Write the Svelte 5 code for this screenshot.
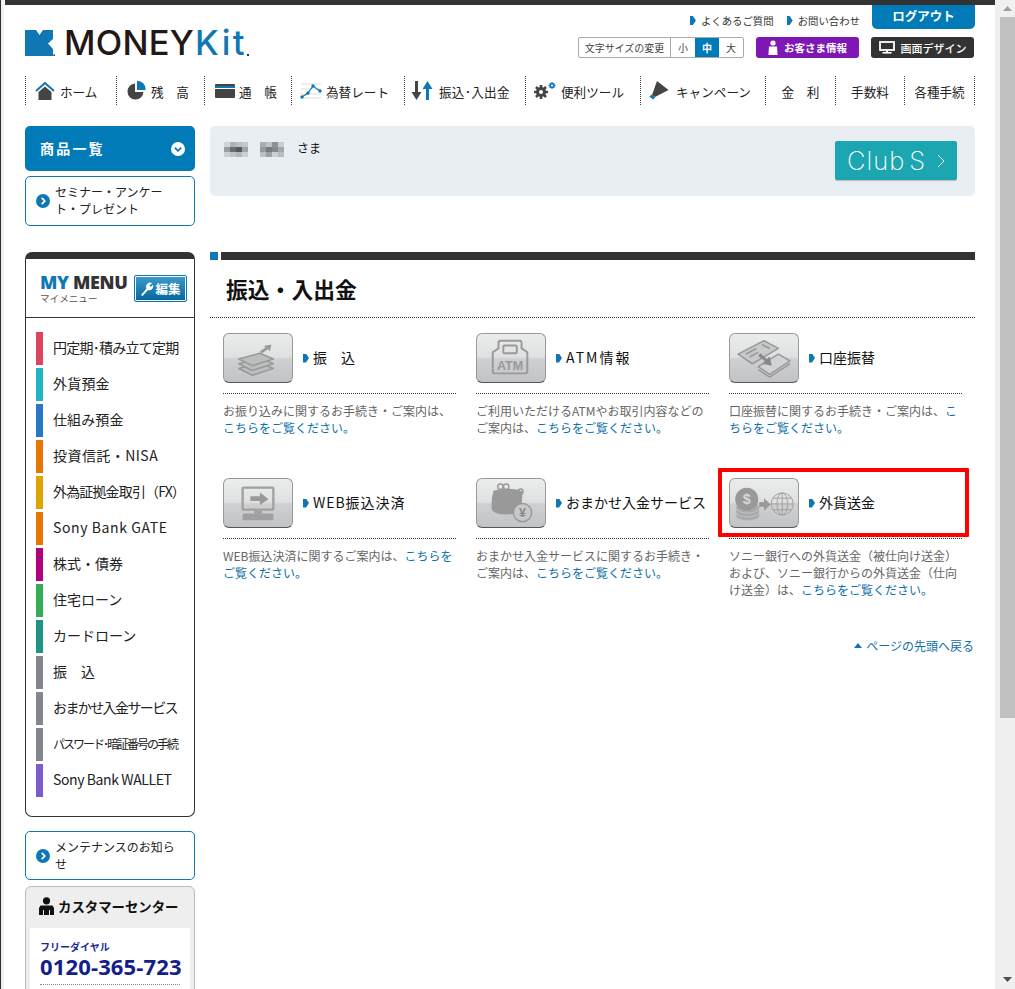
<script>
  const navItems = [
    { icon: 'home', label: 'ホーム' },
    { icon: 'pie', label: '残　高' },
    { icon: 'book', label: '通　帳' },
    { icon: 'rate', label: '為替レート' },
    { icon: 'arrows', label: '振込･入出金' },
    { icon: 'gear', label: '便利ツール' },
    { icon: 'mega', label: 'キャンペーン' },
    { icon: '', label: '金　利' },
    { icon: '', label: '手数料' },
    { icon: '', label: '各種手続' }
  ];
  const menu = [
    { label: '円定期･積み立て定期', color: '#dc4560', ls: '-.75px' },
    { label: '外貨預金', color: '#22b3c4', ls: '.2px' },
    { label: '仕組み預金', color: '#2878c4', ls: '.1px' },
    { label: '投資信託・NISA', color: '#e87700', ls: '.45px' },
    { label: '外為証拠金取引（FX）', color: '#e0a400', ls: '-.85px' },
    { label: 'Sony Bank GATE', color: '#e87700', ls: '.6px' },
    { label: '株式・債券', color: '#b0007e', ls: '0' },
    { label: '住宅ローン', color: '#35ac55', ls: '0' },
    { label: 'カードローン', color: '#1d9484', ls: '0' },
    { label: '振　込', color: '#83878d', ls: '0' },
    { label: 'おまかせ入金サービス', color: '#83878d', ls: '-1.6px' },
    { label: 'パスワード･暗証番号の手続', color: '#83878d', ls: '-2px', tight: true },
    { label: 'Sony Bank WALLET', color: '#7c5cc8', ls: '-.4px' }
  ];
  const tiles = [
    { icon: 'transfer', label: '振　込', ls: '0', before: 'お振り込みに関するお手続き・ご案内は、', link: 'こちらをご覧ください。' },
    { icon: 'atm', label: 'ATM情報', ls: '2px', before: 'ご利用いただけるATMやお取引内容などのご案内は、', link: 'こちらをご覧ください。' },
    { icon: 'debit', label: '口座振替', ls: '0', before: '口座振替に関するお手続き・ご案内は、', link: 'こちらをご覧ください。' },
    { icon: 'web', label: 'WEB振込決済', ls: '.95px', before: 'WEB振込決済に関するご案内は、', link: 'こちらをご覧ください。' },
    { icon: 'purse', label: 'おまかせ入金サービス', ls: '0', before: 'おまかせ入金サービスに関するお手続き・ご案内は、', link: 'こちらをご覧ください。' },
    { icon: 'remit', label: '外貨送金', ls: '0', before: 'ソニー銀行への外貨送金（被仕向け送金）および、ソニー銀行からの外貨送金（仕向け送金）は、', link: 'こちらをご覧ください。', marked: true }
  ];
  const blurA = ['#d3d6d9','#aeb2b6','#bcc0c3','#c4c8cb','#9a9da1','#6a6d71','#55585c','#a0a4a7','#cdd0d3','#bfc3c6','#b4b8bb','#ccd0d2'];
  const blurB = ['#a9adb1','#bfc3c6','#8f9397','#c9ccd0','#96999e','#777b7f','#85898d','#a3a7aa','#bcc0c3','#9ea2a5','#cdd0d2','#b8bcbf'];
</script>

<div class="win">
  <div class="edge"></div>
  <div class="page">
    <div class="topbar"></div>
    <header class="head">
      <div class="logo">
        <svg class="emblem" viewBox="0 0 30 26" width="30" height="26">
          <path d="M0 0H11L14.5 5L18 0H28V9L23 13.5L28 19V26H0Z" fill="#0f78b4" />
          <rect x="28.4" y="24.4" width="1.6" height="1.6" fill="#333" />
        </svg>
        <span class="word">MONEY</span><span class="word kit">Kit</span><i class="dot"></i>
      </div>
      <div class="util">
        <div class="util-top">
          <a class="tlink"><i class="tri"></i>よくあるご質問</a>
          <a class="tlink"><i class="tri"></i>お問い合わせ</a>
          <a class="logout">ログアウト</a>
        </div>
        <div class="util-bottom">
          <div class="sizes">
            <span class="sz-label">文字サイズの変更</span>
            <span class="sz">小</span>
            <span class="sz on">中</span>
            <span class="sz">大</span>
          </div>
          <a class="pill purple">
            <svg viewBox="0 0 10 15" width="10" height="15"><circle cx="5" cy="3" r="2.6" fill="#fff" /><path d="M1 6.5H9L9.6 15H.4Z" fill="#fff" /></svg>
            お客さま情報
          </a>
          <a class="pill dark">
            <svg viewBox="0 0 16 13" width="16" height="13"><rect x="1" y="1" width="14" height="8" fill="none" stroke="#fff" stroke-width="1.8" /><rect x="7" y="9" width="2" height="2" fill="#fff" /><rect x="3.5" y="11" width="9" height="1.6" fill="#fff" /></svg>
            <span class="thin">画面デザイン</span>
          </a>
        </div>
      </div>
    </header>

    <nav class="nav">
      {#each navItems as item}
        <a class="nav-item" class:plain={!item.icon}>
          {#if item.icon === 'home'}
            <svg viewBox="0 0 20 18" width="20" height="18"><path d="M1 9L10 1L19 9" fill="none" stroke="#0f78b4" stroke-width="2" /><path d="M3.5 10L10 4.5L16.5 10V18H3.5Z" fill="#444" /></svg>
          {:else if item.icon === 'pie'}
            <svg viewBox="0 0 19 19" width="19" height="19"><path d="M8 2.5A8 8 0 1 0 16.5 11H8Z" fill="#444" /><path d="M10 0A8 8 0 0 1 18.5 9H10Z" fill="#0f78b4" /></svg>
          {:else if item.icon === 'book'}
            <svg viewBox="0 0 20 14" width="20" height="14"><rect width="20" height="14" rx="1" fill="#444" /><rect y="2" width="20" height="3" fill="#fff" /><rect y="2" width="20" height="2" fill="#0f78b4" /></svg>
          {:else if item.icon === 'rate'}
            <svg viewBox="0 0 22 16" width="22" height="16"><path d="M1 1H21M1 6H21M1 11H21M1 15H21" stroke="#ddd" /><path d="M2 14L8 10L13 3L20 8" fill="none" stroke="#0f78b4" stroke-width="1.2" /><circle cx="2" cy="14" r="1.7" fill="#0f78b4" /><circle cx="8" cy="10" r="1.7" fill="#0f78b4" /><circle cx="13" cy="3" r="1.7" fill="#0f78b4" /><circle cx="20" cy="8" r="1.7" fill="#0f78b4" /></svg>
          {:else if item.icon === 'arrows'}
            <svg viewBox="0 0 22 19" width="22" height="19"><path d="M4 0H7V11H10.5L5.5 19L.5 11H4Z" fill="#444" /><path d="M15 19H18V8H21.5L16.5 0L11.5 8H15Z" fill="#0f78b4" /></svg>
          {:else if item.icon === 'gear'}
            <svg viewBox="0 0 24 19" width="24" height="19"><g stroke="#444" stroke-width="2.6"><path d="M8 4V18M1 11H15M3 6L13 16M13 6L3 16" /></g><circle cx="8" cy="11" r="5" fill="#444" /><circle cx="8" cy="11" r="2" fill="#fff" /><g stroke="#0f78b4" stroke-width="1.3"><path d="M19 1V8M15.5 4.5H22.5M16.6 2.1L21.4 6.9M21.4 2.1L16.6 6.9" /></g><circle cx="19" cy="4.5" r="2.5" fill="#0f78b4" /><circle cx="19" cy="4.5" r="1.1" fill="#fff" /></svg>
          {:else if item.icon === 'mega'}
            <svg viewBox="0 0 20 19" width="20" height="19"><path d="M8 0L19.5 9L6 16L3 14Z" fill="#444" /><path d="M2.6 13.4L6.2 16.3L4.2 18.6L.4 15.8Z" fill="#0f78b4" /></svg>
          {/if}
          <span class="nav-label">{item.label}</span>
        </a>
      {/each}
    </nav>

    <div class="layout">
      <aside class="side">
        <a class="products">
          <span class="products-t">商品一覧</span>
          <i class="circle"><svg viewBox="0 0 14 14" width="14" height="14"><circle cx="7" cy="7" r="7" fill="#fff" /><path d="M3.8 5.7L7 8.8L10.2 5.7" fill="none" stroke="#0b76b2" stroke-width="1.7" /></svg></i>
        </a>
        <a class="linkbox first">
          <svg viewBox="0 0 14 14" width="14" height="14"><circle cx="7" cy="7" r="7" fill="#0f78b4" /><path d="M5.7 3.8L8.8 7L5.7 10.2" fill="none" stroke="#fff" stroke-width="1.7" /></svg>
          <span class="lb-t">セミナー・アンケー<br />ト・プレゼント</span>
        </a>

        <section class="mymenu">
          <div class="mm-head">
            <div class="mm-title">
              <div class="mm-en"><b class="my">MY</b> <b>MENU</b></div>
              <div class="mm-ja">マイメニュー</div>
            </div>
            <a class="edit">
              <svg viewBox="0 0 14 14" width="14" height="14"><path d="M1 13L6.5 6.5A4 4 0 0 1 12 1.2L9.5 3.5L10.8 5L13 2.8A4 4 0 0 1 8 8L2.5 14Z" fill="#fff" /></svg>
              編集
            </a>
          </div>
          <ul class="mm-list">
            {#each menu as m}
              <li class="mm-item" style:--bar={m.color} style:letter-spacing={m.ls}>
                <span class:tight={m.tight}>{m.label}</span>
              </li>
            {/each}
          </ul>
        </section>

        <a class="linkbox second">
          <svg viewBox="0 0 14 14" width="14" height="14"><circle cx="7" cy="7" r="7" fill="#0f78b4" /><path d="M5.7 3.8L8.8 7L5.7 10.2" fill="none" stroke="#fff" stroke-width="1.7" /></svg>
          <span class="lb-t">メンテナンスのお知ら<br />せ</span>
        </a>

        <section class="center">
          <h3 class="center-title">
            <svg viewBox="0 0 15 18" width="15" height="18"><circle cx="7.5" cy="3.8" r="3.6" fill="#111" /><path d="M1.5 8.5H13.5L15 11V18H11V13H10V18H5V13H4V18H0V11Z" fill="#111" /></svg>
            カスタマーセンター
          </h3>
          <div class="center-card">
            <div class="free">フリーダイヤル</div>
            <div class="tel">0120-365-723</div>
            <div class="tel-line"></div>
          </div>
        </section>
      </aside>

      <main class="content">
        <div class="greet">
          <div class="name">
            <div class="blur">{#each blurA as c}<i style:background={c}></i>{/each}</div>
            <div class="blur">{#each blurB as c}<i style:background={c}></i>{/each}</div>
            <span class="sama">さま</span>
          </div>
          <a class="club"><span>Club<span class="club-s">S</span></span>
            <svg viewBox="0 0 8 14" width="8" height="14"><path d="M1 1L7 7L1 13" fill="none" stroke="#fff" stroke-width="1" /></svg>
          </a>
        </div>

        <div class="secbar"><i class="sq"></i><i class="bar"></i></div>
        <h1 class="title">振込・入出金</h1>

        <div class="grid">
          {#each tiles as t}
            <article class="tile">
              <a class="tile-head">
                <span class="tile-btn">
                  <svg viewBox="0 0 70 50" width="68" height="48">
                    {#if t.icon === 'transfer'}
                      <g fill="#bdbebf" stroke="#999" stroke-width="1.6" stroke-linejoin="round">
                        <path d="M15 36L37 30L51 36L29 43Z" />
                        <path d="M15 31L37 25L51 31L29 38Z" />
                        <path d="M15 26L37 20L51 26L29 33Z" />
                      </g>
                      <path d="M37 18L43 14L41 12.5L49 11L47.5 18L45.5 16L39 20Z" fill="#999" />
                    {:else if t.icon === 'atm'}
                      <path d="M22 9Q22 7 24 7H44Q46 7 46 9V15L52 19V39Q52 41 50 41H18Q16 41 16 39V19L22 15Z" fill="none" stroke="#999" stroke-width="2" />
                      <rect x="27" y="12" width="14" height="8" rx="1" fill="none" stroke="#999" stroke-width="2" />
                      <text x="34" y="37" text-anchor="middle" class="atm-t">ATM</text>
                    {:else if t.icon === 'debit'}
                      <path d="M8 21L35 7L50 15L23 31Z" fill="#c8c9ca" stroke="#999" stroke-width="1.6" stroke-linejoin="round" />
                      <path d="M16 21L27 15M20 24L29 19M33 11L41 15" stroke="#999" stroke-width="1.8" />
                      <path d="M29 34L50 21L62 28L41 42Z" fill="#d2d3d4" stroke="#999" stroke-width="1.6" stroke-linejoin="round" />
                      <path d="M29 37L41 45L62 31" fill="none" stroke="#999" stroke-width="1.6" />
                      <path d="M31 20L38 26L41 23.5L43 33L33 31L36 28.5L29 23Z" fill="#888" />
                    {:else if t.icon === 'web'}
                      <rect x="19" y="9" width="32" height="23" rx="1" fill="none" stroke="#a0a0a0" stroke-width="2.4" />
                      <path d="M27 18H37V14L46 21L37 27V23H27Z" fill="#999" />
                      <rect x="31" y="33" width="8" height="3" fill="#a0a0a0" />
                      <rect x="19" y="36" width="32" height="7" rx="1" fill="#a0a0a0" />
                    {:else if t.icon === 'purse'}
                      <path d="M17 12Q36 8 47 13L46 30Q44 37 30 37Q18 37 15 32Q14 20 17 12Z" fill="#999" />
                      <circle cx="24" cy="8" r="2.8" fill="none" stroke="#999" stroke-width="1.5" />
                      <circle cx="30" cy="8" r="2.8" fill="none" stroke="#999" stroke-width="1.5" />
                      <circle cx="45" cy="13" r="2.6" fill="none" stroke="#999" stroke-width="1.5" />
                      <circle cx="47" cy="35" r="9.5" fill="#c8c9ca" stroke="#999" stroke-width="1.5" />
                      <text x="47" y="39.5" text-anchor="middle" class="yen-t">¥</text>
                    {:else if t.icon === 'remit'}
                      <g fill="#a9aaab" stroke="#c8c9ca" stroke-width=".8">
                        <ellipse cx="18" cy="38" rx="12.5" ry="5.5" />
                        <ellipse cx="18" cy="34" rx="12.5" ry="5.5" />
                        <ellipse cx="18" cy="30" rx="12.5" ry="5.5" />
                      </g>
                      <circle cx="17" cy="21" r="12" fill="#999" />
                      <text x="17" y="26.5" text-anchor="middle" class="usd-t">$</text>
                      <path d="M30 24H35V20L42 26.5L35 33V29H30Z" fill="#999" />
                      <g fill="none" stroke="#a0a0a0" stroke-width="1">
                        <circle cx="54" cy="26" r="11.5" />
                        <ellipse cx="54" cy="26" rx="5.5" ry="11.5" />
                        <path d="M54 14.5V37.5M42.5 26H65.5M44 20H64M44 32H64" />
                      </g>
                    {/if}
                  </svg>
                </span>
                <i class="tri big"></i>
                <span class="tile-label" style:letter-spacing={t.ls}>{t.label}</span>
              </a>
              <p class="desc">{t.before}<a class="more">{t.link}</a></p>
              {#if t.marked}<div class="marker"></div>{/if}
            </article>
          {/each}
        </div>

        <div class="backtop"><i class="up"></i>ページの先頭へ戻る</div>
      </main>
    </div>
  </div>
  <div class="scroll">
    <svg class="sarrow" viewBox="0 0 9 5" width="9" height="5"><path d="M4.5 0L9 5H0Z" fill="#a0a0a0" /></svg>
    <div class="thumb"></div>
    <svg class="sarrow down" viewBox="0 0 9 5" width="9" height="5"><path d="M0 0H9L4.5 5Z" fill="#505050" /></svg>
  </div>
</div>

<style>
  :global(body) {
    margin: 0;
    background: #fff;
    font-family: "Noto Sans CJK JP", "Noto Sans", sans-serif;
    color: #222;
    text-spacing-trim: space-all;
  }
  a { color: inherit; text-decoration: none; }
  i { display: block; font-style: normal; }
  p, h1, h3, ul { margin: 0; padding: 0; }

  .win { display: flex; width: 1015px; height: 989px; overflow: hidden; }
  .edge { width: 4px; flex: none; margin-right: 1px; background: #f0f0f0; border-left: 1px solid #3a2a2a; box-sizing: border-box; }
  .page { width: 990px; flex: none; }
  .topbar { height: 5px; background: #333; }

  .head { display: flex; justify-content: space-between; height: 71px; padding: 0 20px; }
  .logo { display: flex; align-items: baseline; height: 26px; margin-top: 25px; line-height: 26px; }
  .emblem { flex: none; align-self: flex-start; margin-right: 9px; }
  .word { font: 500 34.5px/26px "Inter", sans-serif; color: #231815; letter-spacing: .25px; }
  .kit { color: #0f78b4; margin-left: 1px; letter-spacing: 2.4px; }
  .dot { width: 2px; height: 2px; background: #333; align-self: flex-end; margin-left: 0; }

  .util { display: flex; flex-direction: column; align-items: flex-end; }
  .util-top { display: flex; align-items: center; height: 24px; }
  .tlink { display: flex; align-items: center; gap: 5px; font-size: 10.4px; margin-left: 13px; color: #333; padding-top: 7px; line-height: 16px; }
  .tri { width: 6px; height: 9px; flex: none; background: #0f78b4; clip-path: polygon(0 0, 50% 0, 100% 50%, 50% 100%, 0 100%); }
  .logout { display: flex; align-items: center; justify-content: center; width: 103px; height: 24px; padding-bottom: 3px; box-sizing: border-box; margin-left: 12px; background: #007bb7; color: #fff; font-size: 12.5px; font-weight: 700; border-radius: 0 0 5px 5px; }
  .util-bottom { display: flex; align-items: center; gap: 12px; margin-top: 8px; margin-right: 1px; height: 21px; }
  .sizes { display: flex; box-sizing: border-box; height: 21px; border: 1px solid #aaa; border-radius: 2px; font-size: 10px; color: #444; line-height: 19px; }
  .sz-label { width: 91px; text-align: center; border-right: 1px solid #aaa; }
  .sz { width: 24px; text-align: center; }
  .sz.on { background: #007bb7; color: #fff; font-weight: 700; }
  .pill { display: flex; align-items: center; justify-content: center; gap: 6px; width: 103px; height: 21px; border-radius: 3px; color: #fff; font-size: 10.5px; font-weight: 700; }
  .purple { background: #7f17b4; }
  .dark { background: #333; }
  .thin { font-weight: 500; font-size: 11px; }

  .nav { display: flex; height: 29px; margin: 0 20px; border-right: 1px dotted #444; width: 949px; box-sizing: content-box; font-size: 12.6px; line-height: 29px; color: #222; }
  .nav-label { padding-top: 1px; }
  .nav-item { display: flex; align-items: center; gap: 5px; box-sizing: border-box; border-left: 1px dotted #444; padding-left: 9px; white-space: nowrap; }
  .nav-item:nth-child(1) { width: 91px; }
  .nav-item:nth-child(2) { width: 88px; padding-left: 10px; gap: 5px; }
  .nav-item:nth-child(3) { width: 87px; padding-left: 10px; gap: 4px; }
  .nav-item:nth-child(4) { width: 113px; padding-left: 8px; gap: 4px; }
  .nav-item:nth-child(5) { width: 121px; padding-left: 6px; gap: 6px; letter-spacing: .25px; }
  .nav-item:nth-child(6) { width: 115px; padding-left: 7px; gap: 4px; }
  .nav-item:nth-child(7) { width: 125px; padding-left: 8px; gap: 7px; }
  .nav-item:nth-child(8) { width: 70px; }
  .nav-item:nth-child(9) { width: 69px; }
  .nav-item:nth-child(10) { width: 70px; }
  .nav-item.plain { justify-content: center; padding-left: 0; }

  .layout { display: flex; gap: 15px; margin-top: 21px; padding: 0 20px; }
  .side { width: 170px; flex: none; }
  .content { width: 765px; flex: none; }

  .products { display: flex; align-items: center; justify-content: space-between; box-sizing: border-box; height: 45px; padding: 0 10px 0 15px; background: #007bb7; border-radius: 5px; color: #fff; font-size: 14px; font-weight: 700; letter-spacing: 2.2px; }
  .products-t { padding-bottom: 2px; }
  .circle { display: flex; }
  .linkbox { display: flex; align-items: center; gap: 5px; box-sizing: border-box; padding-left: 10px; border: 1px solid #0f78b4; border-radius: 5px; font-size: 12px; line-height: 17px; color: #222; }
  .lb-t { padding-bottom: 2px; }
  .linkbox.first { height: 50px; margin-top: 5px; }
  .linkbox.second { height: 49px; margin-top: 14px; }
  .linkbox svg { flex: none; }

  .mymenu { box-sizing: border-box; height: 565px; margin-top: 26px; border: 1px solid #333; border-top: 7px solid #333; border-radius: 7px; }
  .mm-head { display: flex; justify-content: space-between; align-items: flex-start; box-sizing: border-box; height: 59px; padding: 13px 7px 0 14px; border-bottom: 1px solid #333; }
  .mm-en { font: 700 18px/20px "Open Sans", sans-serif; color: #333; letter-spacing: -.35px; white-space: nowrap; }
  .my { color: #0f78b4; }
  .mm-ja { font-size: 9.6px; line-height: 12px; color: #555; }
  .edit { display: flex; align-items: center; justify-content: center; gap: 1px; width: 53px; height: 27px; margin-top: 3px; box-sizing: border-box; border: 1px solid #0c78b6; outline: 1px solid #fff; outline-offset: -2px; border-radius: 2px; background: linear-gradient(#3d9ccb, #04659c); color: #fff; font-size: 12.5px; font-weight: 700; }
  .mm-list { list-style: none; padding: 14px 0 0 10px; }
  .mm-item { display: flex; align-items: center; box-sizing: border-box; height: 33px; margin-bottom: 3px; border-left: 7px solid var(--bar); padding: 0 0 2px 10px; font-size: 14px; line-height: 31px; color: #222; white-space: nowrap; }
  .tight { font-size: 12px; }

  .center { box-sizing: border-box; height: 120px; margin-top: 6px; border: 1px solid #bbb; border-radius: 6px; background: #eee; }
  .center-title { display: flex; align-items: center; gap: 4px; height: 37px; padding-left: 13px; font-size: 13.4px; font-weight: 700; color: #111; white-space: nowrap; }
  .center-card { margin: 4px 4px 0; padding: 10px 10px 0; background: #fff; height: 80px; box-sizing: border-box; }
  .free { font-size: 10px; font-weight: 700; line-height: 17px; color: #1b2a8c; }
  .tel { font: 700 22px/23px "Open Sans", sans-serif; color: #14208a; white-space: nowrap; letter-spacing: .15px; }
  .tel-line { border-top: 1px dotted #888; margin-top: 6px; }

  .greet { display: flex; justify-content: space-between; align-items: flex-start; box-sizing: border-box; height: 70px; padding: 15px 18px 0 14px; background: #e8eef1; border-radius: 5px; }
  .name { display: flex; align-items: center; gap: 12px; height: 14px; }
  .blur { display: grid; grid-template-columns: repeat(4, 6px); grid-auto-rows: 5px; width: 24px; margin-top: 2px; }
  .sama { margin-left: 1px; font-size: 12px; line-height: 14px; color: #111; }
  .club { display: flex; align-items: center; justify-content: space-between; box-sizing: border-box; width: 122px; height: 39px; padding: 0 12px; background: #1ba6b2; border-radius: 2px; box-shadow: 0 1px 1px #bbb; color: #fff; }
  .club span { font: 200 25.5px/38px "Inter", sans-serif; letter-spacing: 1px; }
  .club .club-s { margin-left: 4px; }

  .secbar { display: flex; gap: 3px; margin-top: 56px; height: 8px; }
  .sq { width: 8px; height: 8px; background: #0f78b4; }
  .bar { flex: 1; background: #333; }
  .title { box-sizing: border-box; height: 58px; padding: 12px 0 0 16px; border-bottom: 1px dotted #333; font-size: 21.8px; font-weight: 700; line-height: 34px; color: #111; }

  .grid { display: grid; grid-template-columns: repeat(3, 233px); column-gap: 20px; row-gap: 42px; padding: 15px 0 0 13px; }
  .tile { position: relative; }
  .tile-head { display: flex; align-items: center; box-sizing: content-box; height: 50px; padding-bottom: 10px; border-bottom: 1px dotted #333; }
  .tile-btn { display: flex; align-items: center; justify-content: center; box-sizing: border-box; width: 70px; height: 50px; flex: none; margin-right: 10px; border: 1px solid #999; border-bottom-color: #555; border-radius: 6px; background: linear-gradient(#ebecec 0, #dfe0e1 48%, #cfd0d2 52%, #c2c3c6 100%); }
  .tri.big { margin-right: 4px; }
  .tile-label { font-size: 14px; color: #111; white-space: nowrap; line-height: 20px; margin-bottom: 2px; }
  .desc { margin-top: 8px; font-size: 12px; line-height: 17px; color: #666; word-break: break-all; }
  .more { color: #0c70a8; }
  .marker { position: absolute; left: -11px; top: -10px; width: 251px; height: 69px; box-sizing: border-box; border: 4px solid #f00; border-radius: 1px; }
  .atm-t { font: 700 13px "Liberation Sans", sans-serif; fill: #999; }
  .yen-t { font: 700 13px "Liberation Sans", sans-serif; fill: #888; }
  .usd-t { font: 700 15px "Liberation Sans", sans-serif; fill: #d5d6d7; }

  .backtop { display: flex; align-items: center; justify-content: flex-end; gap: 4px; margin-top: 39px; padding-right: 1px; font-size: 12px; line-height: 17px; color: #0c70a8; }
  .up { width: 0; height: 0; border-bottom: 5px solid #0f78b4; border-left: 4px solid transparent; border-right: 4px solid transparent; }

  .scroll { display: flex; flex-direction: column; align-items: flex-end; width: 20px; flex: none; height: 989px; background: #f0f0f0; }
  .sarrow { flex: none; margin: 6px 3px 6px 0; }
  .thumb { width: 15px; height: 701px; background: #c0c0c0; }
  .sarrow.down { margin-top: 259px; }
</style>
